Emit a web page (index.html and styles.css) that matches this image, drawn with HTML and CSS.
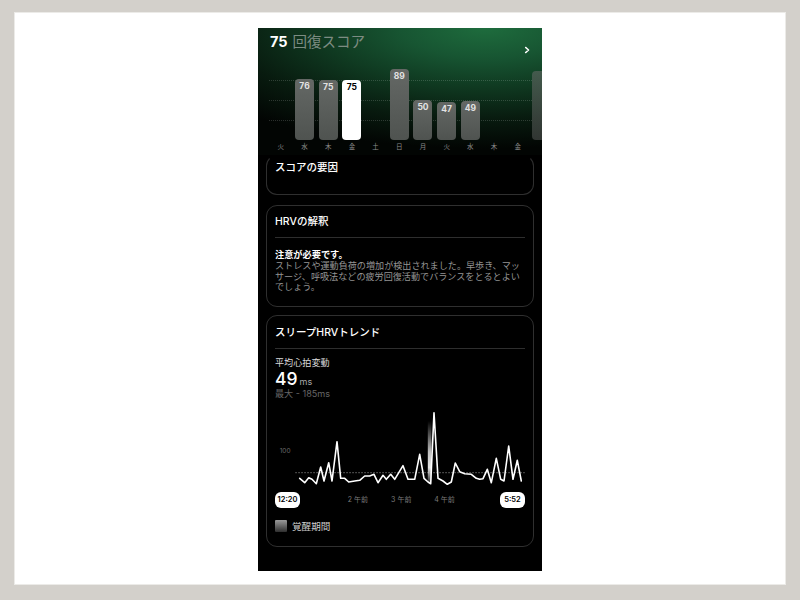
FILE: index.html
```html
<!DOCTYPE html>
<html lang="ja">
<head>
<meta charset="utf-8">
<title>回復スコア</title>
<link rel="stylesheet" href="styles.css">
</head>
<body>
<div class="frame">
  <div class="phone">
    <section class="hero">
      <div class="hero-head">
        <h1 class="score"><span class="num">75</span><span class="label">回復スコア</span></h1>
        <svg class="chev" viewBox="0 0 6 8" width="6" height="8"><polyline points="1.6,1.4 4.6,4 1.6,6.6" fill="none" stroke="#fff" stroke-width="1.4" stroke-linecap="round" stroke-linejoin="round"/></svg>
      </div>
      <div class="chart">
        <div class="grid-line g1"></div>
        <div class="grid-line g2"></div>
        <div class="grid-line g3"></div>
        <div class="cols">
          <div class="col"><div class="bar-area"></div><span class="day">火</span></div>
          <div class="col"><div class="bar-area"><div class="bar" style="height:60.8px">76</div></div><span class="day">水</span></div>
          <div class="col"><div class="bar-area"><div class="bar" style="height:60px">75</div></div><span class="day">木</span></div>
          <div class="col"><div class="bar-area"><div class="bar bar-active" style="height:60px">75</div></div><span class="day">金</span></div>
          <div class="col"><div class="bar-area"></div><span class="day">土</span></div>
          <div class="col"><div class="bar-area"><div class="bar" style="height:71.2px">89</div></div><span class="day">日</span></div>
          <div class="col"><div class="bar-area"><div class="bar" style="height:40px">50</div></div><span class="day">月</span></div>
          <div class="col"><div class="bar-area"><div class="bar" style="height:37.6px">47</div></div><span class="day">火</span></div>
          <div class="col"><div class="bar-area"><div class="bar" style="height:39.2px">49</div></div><span class="day">水</span></div>
          <div class="col"><div class="bar-area"></div><span class="day">木</span></div>
          <div class="col"><div class="bar-area"></div><span class="day">金</span></div>
          <div class="col"><div class="bar-area"><div class="bar bar-next" style="height:68.8px"></div></div></div>
        </div>
      </div>
    </section>

    <main class="content">
      <section class="card card-factors">
        <h2 class="card-title">スコアの要因</h2>
      </section>

      <section class="card card-hrv">
        <h2 class="card-title">HRVの解釈</h2>
        <div class="divider"></div>
        <p class="note">注意が必要です。</p>
        <p class="body-text">ストレスや運動負荷の増加が検出されました。早歩き、マッサージ、呼吸法などの疲労回復活動でバランスをとるとよいでしょう。</p>
      </section>

      <section class="card card-trend">
        <h2 class="card-title">スリープHRVトレンド</h2>
        <div class="divider"></div>
        <p class="metric-label">平均心拍変動</p>
        <p class="metric-value"><span class="big">49</span><span class="unit">ms</span></p>
        <p class="metric-sub">最大 - 185ms</p>
        <svg class="trend" viewBox="0 0 266 91" width="266" height="91">
          <defs>
            <linearGradient id="awake" x1="0" y1="0" x2="0" y2="1">
              <stop offset="0" stop-color="#fff" stop-opacity="0"/>
              <stop offset="0.5" stop-color="#fff" stop-opacity="0.75"/>
              <stop offset="0.75" stop-color="#fff" stop-opacity="0.9"/>
              <stop offset="1" stop-color="#fff" stop-opacity="0.15"/>
            </linearGradient>
          </defs>
          <text x="12.7" y="52.6" class="axis">100</text>
          <line x1="28.3" y1="72.7" x2="257.7" y2="72.7" stroke="#8a8a8a" stroke-width="0.8" stroke-dasharray="1.5 1.5"/>
          <rect x="160.8" y="21" width="3.6" height="62" fill="url(#awake)"/>
          <polyline fill="none" stroke="#fff" stroke-width="1.6" stroke-linejoin="round" stroke-linecap="round"
            points="32.7,78.3 37.7,82.7 41.7,77.7 45,79.3 49.3,83.7 53.7,67 57,81 61.7,62.7 65,81 70,41.7 73.7,78.3 77.7,78.3 81.7,82 87.7,81 92.7,80.3 97.7,76 102.7,76 107,74.3 111,82.7 116,75.3 119.3,79.3 123.7,74.3 127.7,79.3 136,65.7 141,79.3 147.7,79.3 152.7,54.3 157,78.3 161,82 163.7,83.7 167,12.7 171,78.3 176,81 180.3,84.3 184.3,82 188.3,63 192.7,71.7 197.7,73.7 204.3,74.3 209.3,78.3 212.7,79.3 216,78.7 220.3,69.3 224.3,82.7 229.3,58.3 233.7,79.3 237,81 241.7,46 246,79.3 250.3,60.3 254.3,81"/>
        </svg>
        <div class="time-row">
          <span class="pill">12:20</span>
          <span class="tick first">2 午前</span>
          <span class="tick">3 午前</span>
          <span class="tick">4 午前</span>
          <span class="pill pill-end">5:52</span>
        </div>
        <div class="legend">
          <span class="swatch"></span>
          <span class="legend-text">覚醒期間</span>
        </div>
      </section>
    </main>
  </div>
</div>
</body>
</html>
```

FILE: styles.css
```css
* {
  box-sizing: border-box;
  margin: 0;
  padding: 0;
}

html, body {
  width: 800px;
  height: 600px;
  overflow: hidden;
}

body {
  background: #d3d0cb;
  padding: 12px 0 0 14px;
  font-family: Inter, "Noto Sans CJK JP", sans-serif;
}

.frame {
  width: 772px;
  height: 573px;
  background: #ffffff;
  border: 1px solid #ecebe8;
  display: flex;
  justify-content: center;
  align-items: flex-start;
  padding-top: 15px;
}

.phone {
  width: 284px;
  height: 543px;
  background: #000;
  overflow: hidden;
  display: flex;
  flex-direction: column;
}

/* ---------- hero ---------- */
.hero {
  flex: none;
  height: 127px;
  position: relative;
  overflow: hidden;
  display: flex;
  flex-direction: column;
  background:
    radial-gradient(ellipse 120% 95% at 80% 0%, #1e6c3d 0%, #175532 25%, #0f3820 50%, #081b0f 75%, #020503 100%);
}

.hero-head {
  height: 37px;
  flex: none;
  display: flex;
  justify-content: space-between;
  align-items: flex-start;
  padding: 5px 0 0 12px;
}

.score {
  display: flex;
  gap: 5px;
  font-size: 14.5px;
  line-height: 18px;
  font-weight: 700;
  color: #fff;
}

.score .label {
  font-weight: 400;
  color: #7d8c82;
}

.chev {
  display: block;
  margin: 12.5px 12.5px 0 0;
}

.chart {
  position: relative;
  height: 90px;
  flex: none;
}

.grid-line {
  position: absolute;
  left: 11px;
  right: 10px;
  border-top: 1px dotted rgba(255, 255, 255, 0.16);
}
.g1 { top: 15px; }
.g2 { top: 35px; }
.g3 { top: 55px; }

.cols {
  position: relative;
  display: flex;
  padding-left: 11px;
  height: 90px;
}

.col {
  flex: none;
  width: 23.7px;
  display: flex;
  flex-direction: column;
  align-items: center;
}

.bar-area {
  height: 75px;
  width: 100%;
  display: flex;
  flex-direction: column;
  justify-content: flex-end;
  align-items: center;
}

.bar {
  width: 19px;
  border-radius: 4px;
  background: linear-gradient(#646865, #4f5350);
  color: #e2e2e2;
  font-size: 8.5px;
  font-weight: 700;
  line-height: 10px;
  padding-top: 2px;
  text-align: center;
}

.bar-active {
  background: #fff;
  color: #000;
}

.bar-next {
  opacity: 0.6;
}

.day {
  height: 15px;
  line-height: 14px;
  font-size: 6.5px;
  color: #8c8c8c;
}

/* ---------- cards ---------- */
.content {
  display: flex;
  flex-direction: column;
  padding: 0 8px;
}

.card {
  border: 1px solid #2f2f2f;
  border-radius: 11px;
  padding: 0 8px;
  color: #fff;
}

.card-title {
  font-size: 10.5px;
  line-height: 14px;
  font-weight: 500;
  color: #fff;
}

.divider {
  height: 1px;
  background: #2e2e2e;
  margin-top: 8px;
}

.card-factors {
  height: 40px;
  border-top-color: transparent;
  padding-top: 5px;
}

.card-hrv {
  margin-top: 10px;
  padding-top: 9px;
  padding-bottom: 13px;
}

.note {
  margin-top: 11px;
  font-size: 9.2px;
  line-height: 12px;
  font-weight: 700;
  color: #fff;
}

.body-text {
  font-size: 9.1px;
  line-height: 10.5px;
  color: #949494;
}

.card-trend {
  margin-top: 8px;
  padding-top: 10px;
  padding-bottom: 13px;
}

.metric-label {
  margin-top: 8px;
  font-size: 9.1px;
  line-height: 12px;
  color: #dcdcdc;
}

.metric-value {
  line-height: 19px;
  height: 19px;
  display: flex;
  align-items: baseline;
}

.metric-value .big {
  font-size: 17.5px;
  font-weight: 500;
  color: #fff;
}

.metric-value .unit {
  font-size: 9px;
  color: #a8a8a8;
  margin-left: 2px;
}

.metric-sub {
  font-size: 9.1px;
  line-height: 12px;
  color: #666;
}

.trend {
  display: block;
  margin: 0 -8px;
}

.trend .axis {
  font-family: Inter, sans-serif;
  font-size: 6.5px;
  fill: #6b6b6b;
}

.time-row {
  margin-top: 1px;
  height: 16px;
  display: flex;
  align-items: center;
}

.pill {
  width: 25px;
  height: 16px;
  border-radius: 6px;
  background: #fff;
  color: #000;
  font-size: 7.5px;
  font-weight: 600;
  line-height: 16px;
  text-align: center;
}

.pill-end {
  margin-left: auto;
}

.tick {
  width: 43.3px;
  text-align: center;
  font-size: 7px;
  line-height: 16px;
  color: #7a7a7a;
}

.tick.first {
  margin-left: 36.3px;
}

.legend {
  margin-top: 12px;
  height: 13px;
  display: flex;
  align-items: center;
}

.swatch {
  width: 12px;
  height: 11.6px;
  border-radius: 1px;
  background: linear-gradient(#9a9a9a, #2f2f2f);
}

.legend-text {
  margin-left: 5px;
  font-size: 9.6px;
  line-height: 13px;
  color: #cfcfcf;
}
```
